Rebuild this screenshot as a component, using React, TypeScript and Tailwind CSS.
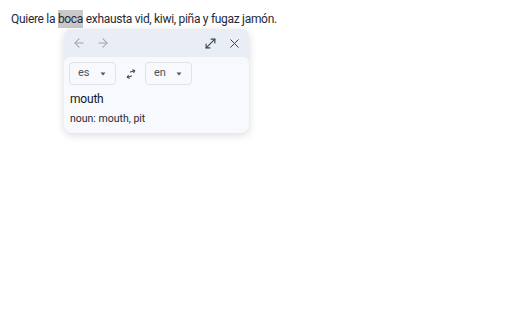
import React from "react";

function Arrow({ dir }: { dir: "l" | "r" }) {
  return (
    <svg width="14" height="14" viewBox="0 0 24 24" fill="none" stroke="currentColor" strokeWidth="1.8" strokeLinecap="round" strokeLinejoin="round">
      {dir === "l" ? (
        <>
          <path d="M19 12H5" />
          <path d="M12 19l-7-7 7-7" />
        </>
      ) : (
        <>
          <path d="M5 12h14" />
          <path d="M12 5l7 7-7 7" />
        </>
      )}
    </svg>
  );
}

function Caret() {
  return (
    <svg width="8" height="8" viewBox="0 0 8 8">
      <path d="M1.5 2.5h5L4 5.5z" fill="#4b5563" />
    </svg>
  );
}

export default function App() {
  return (
    <div className="w-[512px] h-[320px] bg-white relative" style={{ fontFamily: "Roboto, 'Noto Sans', sans-serif" }}>
      <div className="pt-[10px] pl-[11px] text-[12px] leading-[18px] tracking-[-0.3px] text-[#1f2937]">
        Quiere la <span className="inline-block bg-[#c9c9c9]">boca</span> exhausta vid, kiwi, piña y fugaz jamón.
      </div>
      <div className="absolute left-[64px] top-[29px] w-[185px] rounded-[8px] bg-[#e9edf6] shadow-[0_2px_8px_rgba(0,0,0,0.15)] overflow-hidden">
        <div className="h-[28px] flex items-center px-[8px] text-[#9ca3af]">
          <div className="w-[14px]"><Arrow dir="l" /></div>
          <div className="w-[14px] ml-[10px]"><Arrow dir="r" /></div>
          <div className="flex-1" />
          <svg width="15" height="15" viewBox="0 0 24 24" fill="none" stroke="#374151" strokeWidth="1.8" strokeLinecap="round" strokeLinejoin="round">
            <path d="M11 19H5v-6" />
            <path d="M13 5h6v6" />
            <path d="M19 5L5 19" />
          </svg>
          <svg className="ml-[10px]" width="13" height="13" viewBox="0 0 24 24" fill="none" stroke="#374151" strokeWidth="1.8" strokeLinecap="round">
            <path d="M5 5l14 14M19 5L5 19" />
          </svg>
        </div>
        <div className="bg-[#f8f9fc] rounded-t-[6px] px-[5px] pt-[5px] pb-[7px]">
          <div className="flex items-center">
            <div className="w-[47px] h-[23px] border border-[#dfe2e8] rounded-[4px] flex items-center pl-[8px] gap-[9px] text-[11px] text-[#4b5563]">
              <span>es</span>
              <Caret />
            </div>
            <div className="w-[29px] flex justify-center text-[#374151]">
              <svg width="12" height="12" viewBox="0 0 24 24" fill="none" stroke="currentColor" strokeWidth="2" strokeLinecap="round" strokeLinejoin="round">
                <g transform="rotate(-18 12 12)">
                  <path d="M12 8h9" />
                  <path d="M18 5l3 3-3 3" />
                  <path d="M12 16H3" />
                  <path d="M6 13l-3 3 3 3" />
                </g>
              </svg>
            </div>
            <div className="w-[47px] h-[23px] border border-[#dfe2e8] rounded-[4px] flex items-center pl-[8px] gap-[9px] text-[11px] text-[#4b5563]">
              <span>en</span>
              <Caret />
            </div>
          </div>
          <div className="pl-[1px] mt-[6px] text-[12px] leading-[16px] tracking-[-0.2px] text-[#111827]">mouth</div>
          <div className="pl-[1px] mt-[5px] text-[10.5px] leading-[14px] text-[#1f2937]">noun: mouth, pit</div>
        </div>
      </div>
    </div>
  );
}
